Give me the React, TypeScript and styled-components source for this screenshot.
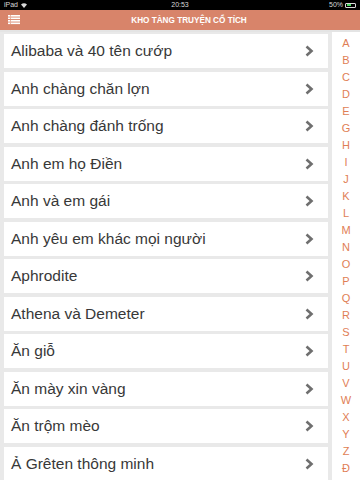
import React from 'react';
import styled, { createGlobalStyle } from 'styled-components';

const ITEMS = [
    'Alibaba và 40 tên cướp',
    'Anh chàng chăn lợn',
    'Anh chàng đánh trống',
    'Anh em họ Điền',
    'Anh và em gái',
    'Anh yêu em khác mọi người',
    'Aphrodite',
    'Athena và Demeter',
    'Ăn giỗ',
    'Ăn mày xin vàng',
    'Ăn trộm mèo',
    'Ả Grêten thông minh',
];

const LETTERS = 'A B C D E G H I J K L M N O P Q R S T U V W X Y Z Đ'.split(' ');

const GlobalStyle = createGlobalStyle`
    html, body {
        margin: 0;
        padding: 0;
        width: 360px;
        height: 480px;
        overflow: hidden;
        background: #e9e9e9;
        font-family: 'Liberation Sans', Arial, sans-serif;
    }
`;

const Page = styled.div`
    width: 360px;
    height: 480px;
    display: flex;
    flex-direction: column;
    overflow: hidden;
`;

const StatusBar = styled.div`
    height: 10px;
    background: #000;
    color: #d8d8d8;
    font-size: 7px;
    line-height: 10px;
    display: grid;
    grid-template-columns: 1fr auto 1fr;
    align-items: center;
    padding: 0 4px;
`;

const StatusLeft = styled.div`
    display: flex;
    align-items: center;
    gap: 3px;
`;

const StatusRight = styled.div`
    display: flex;
    align-items: center;
    justify-content: flex-end;
    gap: 2px;
`;

const Battery = styled.span`
    width: 11px;
    height: 5px;
    border: 1px solid #d8d8d8;
    border-radius: 1px;
    box-sizing: border-box;
    display: inline-flex;
    padding: 0.5px;
    &::before {
        content: '';
        width: 50%;
        background: #4cd964;
    }
`;

const Header = styled.div`
    height: 20px;
    background: #d8846a;
    display: flex;
    align-items: center;
    position: relative;
    justify-content: center;
    padding-left: 18px;
`;

const MenuButton = styled.div`
    position: absolute;
    left: 8px;
    top: 5px;
    display: flex;
    align-items: center;
`;

const Title = styled.div`
    color: #fff;
    font-weight: bold;
    font-size: 8.2px;
`;

const Body = styled.div`
    flex: 1;
    display: flex;
    border-top: 2px solid #e4e4e4;
    min-height: 0;
`;

const List = styled.div`
    flex: 1;
    padding: 2px 4px 0 4px;
    display: flex;
    flex-direction: column;
    gap: 3.5px;
    background: #e9e9e9;
`;

const Row = styled.div`
    height: 34px;
    flex-shrink: 0;
    background: #fff;
    display: flex;
    align-items: center;
    justify-content: space-between;
    padding: 0 14px 0 7px;
`;

const RowText = styled.span`
    font-size: 15.5px;
    color: #383838;
`;

const Index = styled.div`
    width: 28px;
    background: #fff;
    display: flex;
    flex-direction: column;
    align-items: center;
    padding-top: 3px;
`;

const Letter = styled.div`
    height: 17px;
    line-height: 17px;
    font-size: 11px;
    color: #df7e55;
`;

const Chevron = () => (
    <svg width="9" height="12" viewBox="0 0 9 12">
        <polyline points="1.5,1.5 6.5,6 1.5,10.5" fill="none" stroke="#6f6f6f" strokeWidth="2.6" />
    </svg>
);

const MenuIcon = () => (
    <svg width="12" height="10" viewBox="0 0 12 10">
        {[0, 2.5, 5, 7.5].map((y) => (
            <rect key={y} x="0" y={y} width="12" height="1.6" fill="#fff" />
        ))}
        {[0, 2.5, 5, 7.5].map((y) => (
            <rect key={'d' + y} x="2" y={y} width="0.6" height="1.6" fill="#d8846a" />
        ))}
    </svg>
);

const Wifi = () => (
    <svg width="6" height="5" viewBox="0 0 6 5">
        <path d="M0 1.5 Q3 -1 6 1.5 L3 5 Z" fill="#d8d8d8" />
    </svg>
);

const App = () => (
    <Page>
        <GlobalStyle />
        <StatusBar>
            <StatusLeft>
                <span>iPad</span>
                <Wifi />
            </StatusLeft>
            <span>20:53</span>
            <StatusRight>
                <span>50%</span>
                <Battery />
            </StatusRight>
        </StatusBar>
        <Header>
            <MenuButton>
                <MenuIcon />
            </MenuButton>
            <Title>KHO TÀNG TRUYỆN CỔ TÍCH</Title>
        </Header>
        <Body>
            <List>
                {ITEMS.map((item) => (
                    <Row key={item}>
                        <RowText>{item}</RowText>
                        <Chevron />
                    </Row>
                ))}
            </List>
            <Index>
                {LETTERS.map((l) => (
                    <Letter key={l}>{l}</Letter>
                ))}
            </Index>
        </Body>
    </Page>
);

export default App;
